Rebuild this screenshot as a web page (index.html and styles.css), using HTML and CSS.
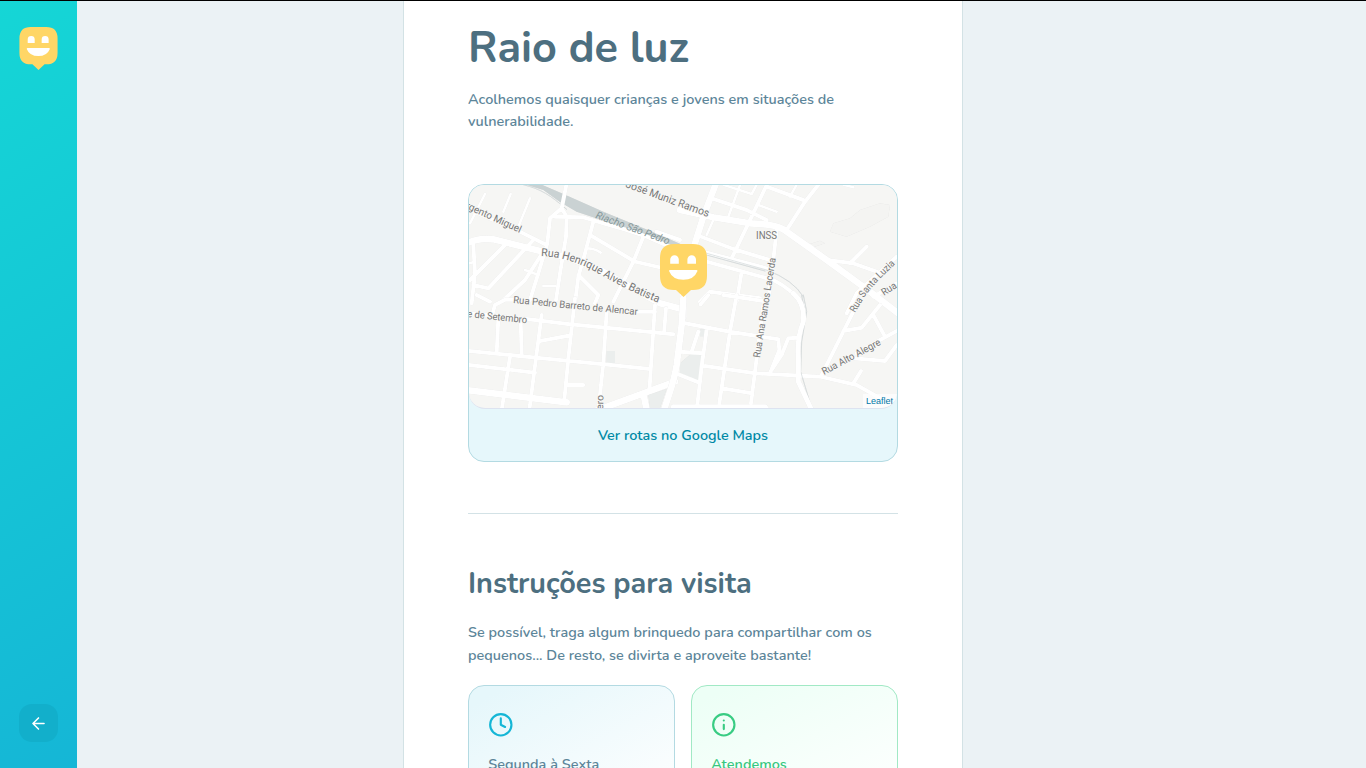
FILE: index.html
```html
<!DOCTYPE html>
<html lang="pt-BR">
<head>
<meta charset="utf-8">
<title>Raio de luz</title>
<link rel="stylesheet" href="styles.css">
</head>
<body>
<div class="app">
  <aside class="sidebar">
    <svg class="logo" viewBox="0 0 47 53"><path class="pin" d="M14 0H33Q47 0 47 14V32Q47 46 33 46H31L23.500 53L16 46H14Q0 46 0 32V14Q0 0 14 0Z"/><path class="face" d="M10.200 19.800V15.500A4.300 4.300 0 0 1 18.800 15.500V19.800ZM27.400 19.800V15.500A4.300 4.300 0 0 1 36 15.500V19.800ZM9 27Q9 26 10 26H36.500Q37.500 26 37.500 27Q34 35.800 23.300 35.800Q12.500 35.800 9 27Z"/></svg>
    <button class="back" aria-label="Voltar"><svg viewBox="0 0 24 24"><path d="M19 12H5M12 19L5 12L12 5"/></svg></button>
  </aside>
  <main class="page">
    <article class="content">
      <h1>Raio de luz</h1>
      <p class="about">Acolhemos quaisquer crianças e jovens em situações de<br>vulnerabilidade.</p>
      <section class="map-card">
        <div class="map">
          <svg class="map-art" viewBox="469 185 428 223">
            <g class="roads" transform="translate(460 180) scale(.33333)">
              <path class="water" d="M185 10H235L310 42L430 95L600 165L680 200H640L500 151L440 125L350 95L300 66L250 30Z"/>
              <path class="rail" d="M190 14C245 28 270 45 320 88"/>
              <path class="thin" d="M75 42L30 130M152 42L130 95M210 55L175 140M380 205Q405 205 422 218M195 270L235 285M250 318H285M28 250L45 245"/>
              <path d="M20 85L180 155L260 195M320 10L305 85L320 110L318 170L300 280L288 360M305 85L270 115L262 190L235 280L210 360M285 110L370 112L430 130L500 150L560 170L640 205M400 125L375 220L355 290L345 370M390 165L525 245L600 262M550 170L520 245L460 365M355 285L415 345L405 370M220 180L85 325L40 315M135 195L30 300M40 195L45 280L35 370M250 215L195 300L125 365M590 155L660 180"/>
              <path class="main" d="M20 190Q60 172 100 178L250 215L330 235L420 270L500 315L600 370L665 387"/>
            </g>
            <g class="roads" transform="translate(680 180) scale(.33333)">
              <path class="hill" d="M450 155L460 130L510 115L540 90L600 70L630 75L625 110L570 140L500 170ZM380 195L420 182L435 190L400 202Z"/>
              <path class="thin" d="M130 14L215 42L230 14M350 14L330 50M235 75L290 95M490 14L520 22M100 120L80 165M180 15L145 110"/>
              <path d="M95 55L200 90L260 120M260 15L215 110L155 235M260 20L370 60M415 14L375 65L320 150M50 165L160 207L270 240M50 210L260 265M80 245L280 300C320 320 345 340 370 375M290 150L280 240L265 360M185 275L170 365M60 365L90 335L240 355M440 240L520 250L590 275M510 250L560 200M650 230L530 340L500 400M650 310L580 350"/>
              <path class="rail" d="M80 220L260 270Q340 300 370 350M80 225L255 273"/>
              <path class="main" d="M110 5L70 110L45 190L10 300L10 410M0 90L100 112L210 130Q285 132 310 148L440 240L570 335L680 420"/>
            </g>
            <g class="roads" transform="translate(460 295) scale(.33333)">
              <path class="block" d="M440 168H465V205H440Z"/>
              <path d="M50 0L90 20M180 14H135L105 30L98 55M25 55L200 72L330 88L440 98L640 118M115 70L110 175M182 75L185 182M245 60L228 190L208 345M345 10L325 190L312 325M440 50L430 205L415 345M240 138L325 122M28 168L230 188L430 208L570 222M28 210L225 233M150 185L125 345M320 270H370M585 30L568 290M618 40L612 115M530 50H585"/>
              <path class="main" d="M20 285L320 322M400 350L550 295L645 260M550 295L560 345"/>
              <path class="block" d="M565 300L620 282L600 340H570Z"/>
            </g>
            <g class="roads" transform="translate(680 295) scale(.33333)">
              <path class="block" d="M60 103H80V124H60ZM0 205L35 175L68 182L60 258L0 235Z"/>
              <path d="M15 85L150 110L295 133L298 165L270 235M170 0L150 110L118 325M130 0L250 18M85 0L62 28M80 105L65 215L52 330M55 110L35 170M0 170L70 175M75 213L225 235L420 245L530 270L610 315M250 30L213 325M125 280L215 295M-18 233L55 262M355 128L325 130L305 180L275 225M530 30L490 110L425 240M490 108L545 98L600 30M580 60L615 125M650 108L600 135L530 175M520 190L615 198L650 150M520 265L543 228"/>
              <path class="rail" d="M370 0L380 50L365 140L362 230L395 340M365 2L376 55"/>
              <path class="mid" d="M340 -5Q375 25 370 80Q350 130 355 190V260L395 345M-20 335H255L262 345"/>
              <path class="main" d="M10 10L5 90L-10 210Q-18 255 -30 290L-48 345"/>
            </g>
            <defs>
              <path id="henrique" d="M541 256Q568 257 594 271Q624 289 659 303"/>
              <path id="luzia" d="M855 313L864 298Q872 285 900 260"/>
            </defs>
            <g class="labels">
              <text transform="translate(465 208) rotate(24.500)" textLength="60" lengthAdjust="spacingAndGlyphs">rgento Miguel</text>
              <text class="big" transform="translate(625 187) rotate(20)" textLength="88" lengthAdjust="spacingAndGlyphs">José Muniz Ramos</text>
              <text class="river" transform="translate(595 218) rotate(20)" textLength="78" lengthAdjust="spacingAndGlyphs">Riacho São Pedro</text>
              <text class="big"><textPath href="#henrique" textLength="127" lengthAdjust="spacingAndGlyphs">Rua Henrique Alves Batista</textPath></text>
              <text transform="translate(513 303) rotate(5.500)" textLength="125" lengthAdjust="spacingAndGlyphs">Rua Pedro Barreto de Alencar</text>
              <text transform="translate(467 317) rotate(6)" textLength="60" lengthAdjust="spacingAndGlyphs">e de Setembro</text>
              <text x="756" y="239" textLength="21" lengthAdjust="spacingAndGlyphs">INSS</text>
              <text transform="translate(760 358) rotate(-81)" textLength="101" lengthAdjust="spacingAndGlyphs">Rua Ana Ramos Lacerda</text>
              <text><textPath href="#luzia" textLength="64" lengthAdjust="spacingAndGlyphs">Rua Santa Luzia</textPath></text>
              <text transform="translate(884 296) rotate(-33)" textLength="16" lengthAdjust="spacingAndGlyphs">Rua</text>
              <text transform="translate(824 375) rotate(-28)" textLength="65" lengthAdjust="spacingAndGlyphs">Rua Alto Alegre</text>
              <text transform="translate(603 410) rotate(-88)" textLength="15" lengthAdjust="spacingAndGlyphs">ero</text>
            </g>
          </svg>
          <svg class="marker" viewBox="0 0 47 53"><path class="pin" d="M14 0H33Q47 0 47 14V32Q47 46 33 46H31L23.500 53L16 46H14Q0 46 0 32V14Q0 0 14 0Z"/><path class="face" d="M10.200 19.800V15.500A4.300 4.300 0 0 1 18.800 15.500V19.800ZM27.400 19.800V15.500A4.300 4.300 0 0 1 36 15.500V19.800ZM9 27Q9 26 10 26H36.500Q37.500 26 37.500 27Q34 35.800 23.300 35.800Q12.500 35.800 9 27Z"/></svg>
          <span class="credit">Leaflet</span>
        </div>
        <footer class="route"><a>Ver rotas no Google Maps</a></footer>
      </section>
      <hr>
      <h2>Instruções para visita</h2>
      <p class="instructions">Se possível, traga algum brinquedo para compartilhar com os<br>pequenos... De resto, se divirta e aproveite bastante!</p>
      <div class="details">
        <div class="detail hours">
          <svg viewBox="0 0 24 24"><circle cx="12" cy="12" r="10"/><path d="M12 6V12L16 14"/></svg>
          <p>Segunda à Sexta</p>
        </div>
        <div class="detail open">
          <svg viewBox="0 0 24 24"><circle cx="12" cy="12" r="10"/><path d="M12 16V12M12 8H12.010"/></svg>
          <p>Atendemos</p>
        </div>
      </div>
    </article>
  </main>
</div>
</body>
</html>
```

FILE: styles.css
```css
* { box-sizing: border-box; }
body { margin: 0; overflow: hidden; background: #ebf2f5; font-family: Nunito, Lato, sans-serif; color: #5c8599; }
h1, h2, p { margin: 0; }
.app { display: flex; height: 768px; border-top: 1px solid #000; overflow: hidden; }
.sidebar { width: 77px; flex: none; display: flex; flex-direction: column; align-items: center; justify-content: space-between; padding: 26px 0; background: linear-gradient(329.54deg, #15b6d6 0%, #15d6d6 100%); }
.pin { fill: #ffd666; }
.face { fill: #fff; }
.logo { width: 39px; height: 43px; }
.back { width: 39px; height: 38px; border: 0; border-radius: 13px; background: #12afcb; padding: 0; display: flex; align-items: center; justify-content: center; }
.back svg { width: 19px; height: 19px; fill: none; stroke: #fff; stroke-width: 2; stroke-linecap: round; stroke-linejoin: round; }
.page { flex: 1; padding-left: 326px; }
.content { width: 560px; height: 900px; background: #fff; border: solid #d3e2e5; border-width: 0 1px; padding: 20px 64px 0; }
h1 { font-size: 43.200px; line-height: 54px; font-weight: 700; color: #4d6f80; white-space: nowrap; }
h2 { font-size: 28.800px; line-height: 40px; font-weight: 700; color: #4d6f80; white-space: nowrap; }
.about, .instructions { font-size: 14.400px; line-height: 22.400px; font-weight: 580; letter-spacing: .03px; white-space: nowrap; }
.about { height: 45px; margin-top: 13px; }
.instructions { height: 45px; margin-top: 17px; line-height: 23px; }
.map-card { margin-top: 51px; height: 278px; border: 1px solid #b3dae2; border-radius: 16px; background: #e6f7fb; overflow: hidden; }
.map { position: relative; height: 224px; background: #f6f6f4; border-bottom: 1px solid #dde3f0; border-radius: 0 0 16px 16px; overflow: hidden; }
.map-art { display: block; width: 428px; height: 223px; }
.roads { fill: none; stroke: #fff; stroke-width: 12; stroke-linejoin: round; stroke-linecap: round; filter: drop-shadow(0 0 .5px #dedede); }
.roads .thin { stroke-width: 8; }
.roads .mid { stroke-width: 15; }
.roads .main { stroke-width: 20; }
.roads .rail { stroke: #cfd7d8; stroke-width: 2; }
.roads .water { fill: #cad2d3; stroke: none; }
.roads .block { fill: #ebeeed; stroke: none; }
.roads .hill { fill: #f4f4f2; stroke: none; }
.labels { font: 10px Roboto, sans-serif; fill: #777; stroke: #f8f8f6; stroke-width: 1.500px; paint-order: stroke; }
.labels .big { font-size: 11px; }
.labels .river { font-size: 10.500px; font-style: italic; fill: #859799; stroke: none; }
.marker { position: absolute; left: 191px; top: 58.500px; width: 47px; height: 53px; }
.credit { position: absolute; right: 0; bottom: 0; padding: 0 4px 0 3px; font: 9px/14px "Liberation Sans", sans-serif; color: #0078a8; background: rgba(255,255,255,.7); }
.route { height: 52px; display: flex; align-items: center; justify-content: center; font-size: 14.400px; color: #0089a5; white-space: nowrap; }
.route a { font-weight: 650; }
hr { height: 1px; border: 0; margin: 51px 0 50px; background: #d3e2e6; }
.details { display: grid; grid-template-columns: 1fr 1fr; gap: 16px; margin-top: 19px; }
.detail { height: 146px; border-radius: 16px; border: 1px solid #b3dae2; padding: 26px 19.200px; font-size: 14.400px; font-weight: 580; letter-spacing: .03px; white-space: nowrap; }
.detail svg { display: block; width: 25.600px; height: 25.600px; fill: none; stroke-width: 2; stroke-linecap: round; stroke-linejoin: round; }
.detail p { margin-top: 15.400px; line-height: 22px; }
.hours { background: linear-gradient(149.97deg, #e6f7fb 8.130%, #fff 92.670%); }
.hours svg { stroke: #15b6d6; }
.open { background: linear-gradient(154.16deg, #edfff6 7.850%, #fff 91.030%); border-color: #a1e9c5; color: #37c77f; }
.open svg { stroke: #39cc83; }
```
